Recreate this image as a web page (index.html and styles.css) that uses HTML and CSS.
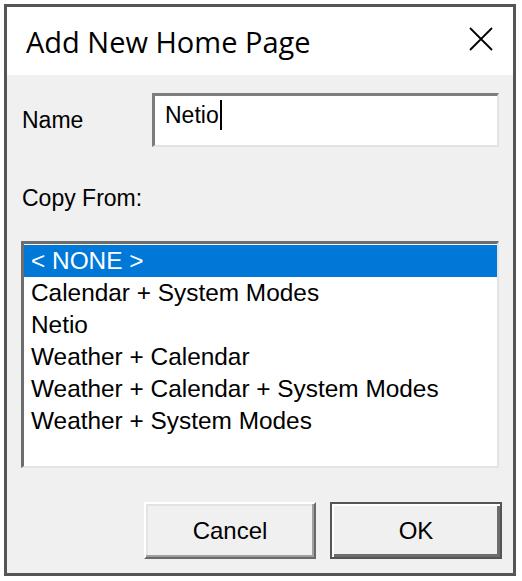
FILE: index.html
```html
<!DOCTYPE html>
<html>
<head>
<meta charset="utf-8">
<title>Add New Home Page</title>
<link rel="stylesheet" href="styles.css">
</head>
<body>
<div class="window">
  <div class="titlebar">
    <div class="title">Add New Home Page</div>
    <svg class="close" width="24" height="24" viewBox="0 0 24 24" aria-label="Close">
      <path d="M1 1 L23 23 M23 1 L1 23" stroke="#000" stroke-width="1.8" fill="none"/>
    </svg>
  </div>
  <div class="content">
    <div class="name-row">
      <label class="label name-label">Name</label>
      <div class="input"><span class="input-text">Netio</span><span class="caret"></span></div>
    </div>
    <div class="label copy-label">Copy From:</div>
    <div class="listbox">
      <div class="item selected">&lt; NONE &gt;</div>
      <div class="item">Calendar + System Modes</div>
      <div class="item">Netio</div>
      <div class="item">Weather + Calendar</div>
      <div class="item">Weather + Calendar + System Modes</div>
      <div class="item">Weather + System Modes</div>
    </div>
    <div class="buttons">
      <div class="btn">Cancel</div>
      <div class="btn btn-default">OK</div>
    </div>
  </div>
</div>
</body>
</html>
```

FILE: styles.css
```css
html, body {
  margin: 0;
  padding: 0;
  background: #ffffff;
}

body {
  width: 522px;
  height: 581px;
  overflow: hidden;
}

.window {
  margin: 4px;
  width: 512px;
  height: 572px;
  box-sizing: border-box;
  border: 3px solid #555555;
  display: flex;
  flex-direction: column;
  font-family: "Liberation Sans", Arial, sans-serif;
  color: #000;
}

.titlebar {
  height: 68px;
  flex: none;
  background: #ffffff;
  display: flex;
  align-items: center;
  justify-content: space-between;
}

.title {
  font-family: "Open Sans", "Noto Sans", sans-serif;
  font-size: 29px;
  line-height: 38px;
  margin-left: 19px;
  padding-top: 1px;
  color: #000;
}

.close {
  align-self: flex-start;
  margin-top: 20px;
  margin-right: 20px;
}

.content {
  flex: 1;
  background: #f0f0f0;
  padding: 18px 11px 0 14px;
  display: flex;
  flex-direction: column;
}

.label {
  font-size: 23px;
  line-height: 26px;
  margin-left: 1px;
}

.name-row {
  display: flex;
  align-items: center;
  height: 54px;
}

.name-label {
  width: 130px;
  flex: none;
}

.input {
  width: 347px;
  height: 54px;
  box-sizing: border-box;
  background: #fff;
  border-style: solid;
  border-width: 3px 2px 2px 3px;
  border-color: #7d7d7d #e3e3e3 #e3e3e3 #7d7d7d;
  padding: 4px 0 0 10px;
  font-size: 23px;
  line-height: 30px;
}

.caret {
  display: inline-block;
  width: 2px;
  height: 30px;
  background: #000;
  vertical-align: -7px;
  margin-left: 1px;
}

.copy-label {
  margin-top: 38px;
}

.listbox {
  margin-top: 30px;
  width: 478px;
  height: 227px;
  box-sizing: border-box;
  background: #fff;
  border-style: solid;
  border-width: 3px 2px 2px 3px;
  border-color: #6d6d6d #e3e3e3 #e3e3e3 #6d6d6d;
  padding: 1px 0 0 0;
}

.item {
  height: 32px;
  line-height: 32px;
  font-size: 24.4px;
  padding-left: 7px;
  white-space: nowrap;
}

.item.selected {
  background: #0078d7;
  color: #fff;
}

.buttons {
  margin-top: 34px;
  display: flex;
  justify-content: flex-end;
  gap: 14px;
}

.btn {
  width: 172px;
  height: 57px;
  box-sizing: border-box;
  display: flex;
  align-items: center;
  justify-content: center;
  font-size: 24px;
  background: #f0f0f0;
  border-style: solid;
  border-width: 2px;
  border-color: #ffffff #696969 #696969 #ffffff;
  box-shadow: inset -2px -2px 0 #a0a0a0, inset 2px 2px 0 #e3e3e3;
}

.btn-default {
  border-color: #555555;
  box-shadow: inset 2px 2px 0 #ffffff, inset -3px -3px 0 #6d6d6d;
}
```
